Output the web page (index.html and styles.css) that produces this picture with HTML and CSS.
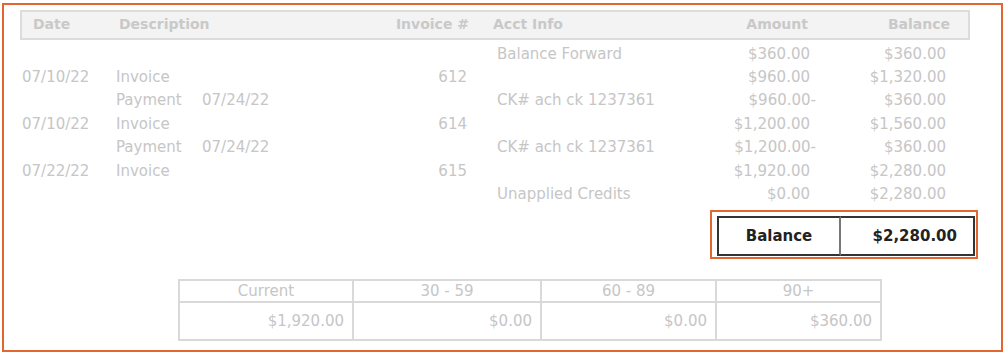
FILE: index.html
```html
<!DOCTYPE html>
<html>
<head>
    <meta charset="UTF-8">
    <meta name="viewport" content="width=device-width, initial-scale=1.0">
    <title>Statement</title>
    <link rel="stylesheet" href="styles.css">
</head>
<body>
    <div class="statement">
        <div class="ledger">
            <div class="ledger-head">
                <span class="c-date">Date</span>
                <span class="c-desc">Description</span>
                <span class="c-inv">Invoice #</span>
                <span class="c-acct">Acct Info</span>
                <span class="c-amt">Amount</span>
                <span class="c-bal">Balance</span>
            </div>

            <div class="ledger-row">
                <span class="c-date"></span><span class="c-type"></span><span class="c-pdate"></span>
                <span class="c-inv"></span><span class="c-acct">Balance Forward</span>
                <span class="c-amt">$360.00</span><span class="c-bal">$360.00</span>
            </div>
            <div class="ledger-row">
                <span class="c-date">07/10/22</span><span class="c-type">Invoice</span><span class="c-pdate"></span>
                <span class="c-inv">612</span><span class="c-acct"></span>
                <span class="c-amt">$960.00</span><span class="c-bal">$1,320.00</span>
            </div>
            <div class="ledger-row">
                <span class="c-date"></span><span class="c-type">Payment</span><span class="c-pdate">07/24/22</span>
                <span class="c-inv"></span><span class="c-acct">CK# ach ck 1237361</span>
                <span class="c-amt neg">$960.00-</span><span class="c-bal">$360.00</span>
            </div>
            <div class="ledger-row">
                <span class="c-date">07/10/22</span><span class="c-type">Invoice</span><span class="c-pdate"></span>
                <span class="c-inv">614</span><span class="c-acct"></span>
                <span class="c-amt">$1,200.00</span><span class="c-bal">$1,560.00</span>
            </div>
            <div class="ledger-row">
                <span class="c-date"></span><span class="c-type">Payment</span><span class="c-pdate">07/24/22</span>
                <span class="c-inv"></span><span class="c-acct">CK# ach ck 1237361</span>
                <span class="c-amt neg">$1,200.00-</span><span class="c-bal">$360.00</span>
            </div>
            <div class="ledger-row">
                <span class="c-date">07/22/22</span><span class="c-type">Invoice</span><span class="c-pdate"></span>
                <span class="c-inv">615</span><span class="c-acct"></span>
                <span class="c-amt">$1,920.00</span><span class="c-bal">$2,280.00</span>
            </div>
            <div class="ledger-row">
                <span class="c-date"></span><span class="c-type"></span><span class="c-pdate"></span>
                <span class="c-inv"></span><span class="c-acct">Unapplied Credits</span>
                <span class="c-amt">$0.00</span><span class="c-bal">$2,280.00</span>
            </div>
        </div>

        <div class="total-wrap">
            <div class="total-box">
                <span class="total-label">Balance</span>
                <span class="total-value">$2,280.00</span>
            </div>
        </div>

        <table class="aging">
            <tr>
                <th>Current</th>
                <th>30 - 59</th>
                <th>60 - 89</th>
                <th>90+</th>
            </tr>
            <tr>
                <td>$1,920.00</td>
                <td>$0.00</td>
                <td>$0.00</td>
                <td>$360.00</td>
            </tr>
        </table>
    </div>
</body>
</html>
```

FILE: styles.css
```css
body {
    margin: 0;
    background: #fff;
    font-family: "DejaVu Sans", Verdana, sans-serif;
    font-size: 15px;
    color: #c6c6c6;
}
.statement {
    margin: 3px 0 0 2px;
    border: 2px solid #e2662f;
    padding: 5px 0 0 16px;
    width: 981px;
    height: 340px;
}
.ledger {
    width: 950px;
}
.ledger-head, .ledger-row {
    display: grid;
    grid-template-columns: 92px 86px 110px 164px 200px 140px 158px;
    align-items: center;
    white-space: nowrap;
}
.ledger-head {
    grid-template-columns: 90px 196px 164px 200px 140px 156px;
    height: 24px;
    padding-bottom: 2px;
    background: #f3f3f3;
    border: 2px solid #dcdcdc;
    font-size: 14px;
    font-weight: bold;
    color: #c9c9c9;
    margin-bottom: 2px;
}
.ledger-head .c-date { padding-left: 11px; }
.ledger-head .c-desc { padding-left: 7px; }
.ledger-head .c-inv { text-align: right; padding-right: 3px; }
.ledger-head .c-acct { padding-left: 21px; }
.ledger-head .c-amt { text-align: right; padding-right: 4px; }
.ledger-head .c-bal { text-align: right; padding-right: 18px; }

.ledger-row {
    height: 23.4px;
}
.ledger-row .c-date { padding-left: 2px; }
.ledger-row .c-type { padding-left: 4px; }
.ledger-row .c-pdate { padding-left: 4px; }
.ledger-row .c-inv { text-align: right; padding-right: 5px; }
.ledger-row .c-acct { padding-left: 25px; }
.ledger-row .c-amt { text-align: right; padding-right: 2px; }
.ledger-row .c-amt.neg { margin-right: -6px; }
.ledger-row .c-bal { text-align: right; padding-right: 24px; }

.total-wrap {
    display: flex;
    justify-content: flex-end;
    width: 958px;
    margin-top: 4px;
}
.total-box {
    display: flex;
    border: 2px solid #e2662f;
    padding: 4px 1px 1px 5px;
    width: 268px;
    height: 49px;
    box-sizing: border-box;
}
.total-label, .total-value {
    border: 2px solid #333;
    height: 40px;
    box-sizing: border-box;
    display: flex;
    align-items: center;
    font-weight: bold;
    color: #222;
    font-size: 15px;
}
.total-label {
    width: 124px;
    justify-content: center;
    border-right: 2px solid #777;
}
.total-value {
    flex: 1;
    border-left: none;
    justify-content: flex-end;
    padding-right: 16px;
}
.aging {
    border-collapse: collapse;
    table-layout: fixed;
    margin: 20px 0 0 158px;
    width: 702px;
    border: 2px solid #d9d9d9;
}
.aging th, .aging td {
    border: 2px solid #d9d9d9;
    font-weight: normal;
    white-space: nowrap;
}
.aging th {
    height: 20px;
    text-align: center;
    padding: 0;
    line-height: 18px;
}
.aging td {
    height: 36px;
    text-align: right;
    padding: 0 8px 0 0;
}
.aging th:nth-child(1) { width: 172px; }
.aging th:nth-child(2) { width: 186px; }
.aging th:nth-child(3) { width: 173px; }
.aging th:nth-child(4) { width: 163px; }
```
